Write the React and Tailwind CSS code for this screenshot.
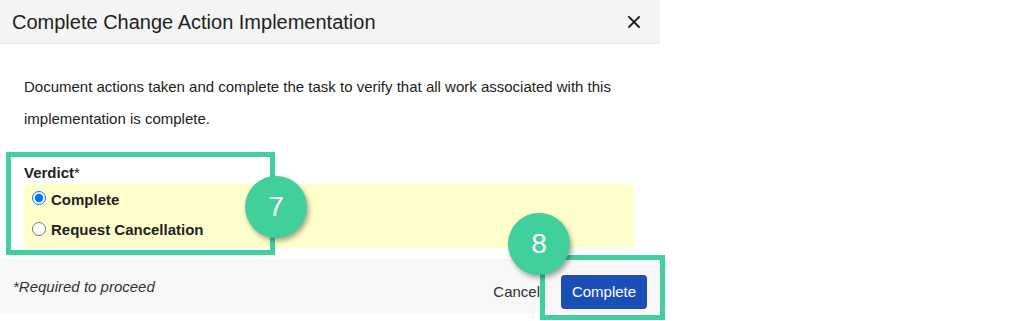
import { useState } from "react";

export default function App() {
  const [verdict, setVerdict] = useState("complete");

  return (
    <div className="relative w-[1018px] h-[321px] overflow-hidden bg-white font-['Liberation_Sans',Arial,sans-serif] text-[#222]">
      {/* Dialog */}
      <div className="w-[660px] flex flex-col">
        {/* Header */}
        <div className="h-[44px] bg-[#f4f4f4] border-b border-[#ebebeb] flex items-center justify-between pl-[12px] pr-[20px]">
          <h1 className="text-[20px] leading-none text-[#222]">Complete Change Action Implementation</h1>
          <button className="w-[12px] h-[12px] flex items-center justify-center" aria-label="Close">
            <svg width="12" height="12" viewBox="0 0 12 12">
              <path d="M1 1 L11 11 M11 1 L1 11" stroke="#1a1a1a" strokeWidth="1.8" strokeLinecap="square" />
            </svg>
          </button>
        </div>

        {/* Body */}
        <div className="px-[24px] pt-[27px] pb-[11px]">
          <p className="text-[15px] leading-[32px] text-[#222]">
            Document actions taken and complete the task to verify that all work associated with this implementation is complete.
          </p>

          <div className="mt-[29px] text-[15px] leading-[17px] font-bold">
            Verdict<span className="font-normal">*</span>
          </div>

          <div className="mt-[3px] bg-[#ffffcc] w-[610px] pt-[1px] pb-[2px]">
            <label className="h-[30px] flex items-center gap-[5px] pl-[8px] text-[15px] font-bold">
              <input
                type="radio"
                name="verdict"
                className="m-0 w-[14px] h-[14px] -translate-y-[2px]"
                checked={verdict === "complete"}
                onChange={() => setVerdict("complete")}
              />
              Complete
            </label>
            <label className="h-[31px] flex items-center gap-[5px] pl-[8px] text-[15px] font-bold">
              <input
                type="radio"
                name="verdict"
                className="m-0 w-[14px] h-[14px] -translate-y-[2px]"
                checked={verdict === "cancel"}
                onChange={() => setVerdict("cancel")}
              />
              Request Cancellation
            </label>
          </div>
        </div>

        {/* Footer */}
        <div className="h-[54px] bg-[#f7f7f7] flex items-center justify-between pl-[13px] pr-[13px]">
          <span className="pt-[3px] text-[15px] italic text-[#333]">*Required to proceed</span>
          <div className="flex items-center gap-[21px] pt-[12px]">
            <button className="text-[15px] text-[#333]">Cancel</button>
            <button className="w-[86px] h-[34px] rounded-[4px] bg-[#1b4fb8] text-white text-[15px]">Complete</button>
          </div>
        </div>
      </div>

      {/* Annotation boxes */}
      <div className="absolute left-[6px] top-[152px] w-[269px] h-[103px] border-[5px] border-[#41cf9c]" />
      <div className="absolute left-[540px] top-[255px] w-[125px] h-[65px] border-[5px] border-[#41cf9c]" />

      {/* Step markers */}
      <div className="absolute left-[245px] top-[176px] w-[62px] h-[62px] rounded-full bg-[#41cf9c] shadow-[2px_3px_5px_rgba(0,0,0,0.35)] flex items-center justify-center text-white text-[28px]">
        7
      </div>
      <div className="absolute left-[508px] top-[213px] w-[62px] h-[62px] rounded-full bg-[#41cf9c] shadow-[2px_3px_5px_rgba(0,0,0,0.35)] flex items-center justify-center text-white text-[28px]">
        8
      </div>
    </div>
  );
}
